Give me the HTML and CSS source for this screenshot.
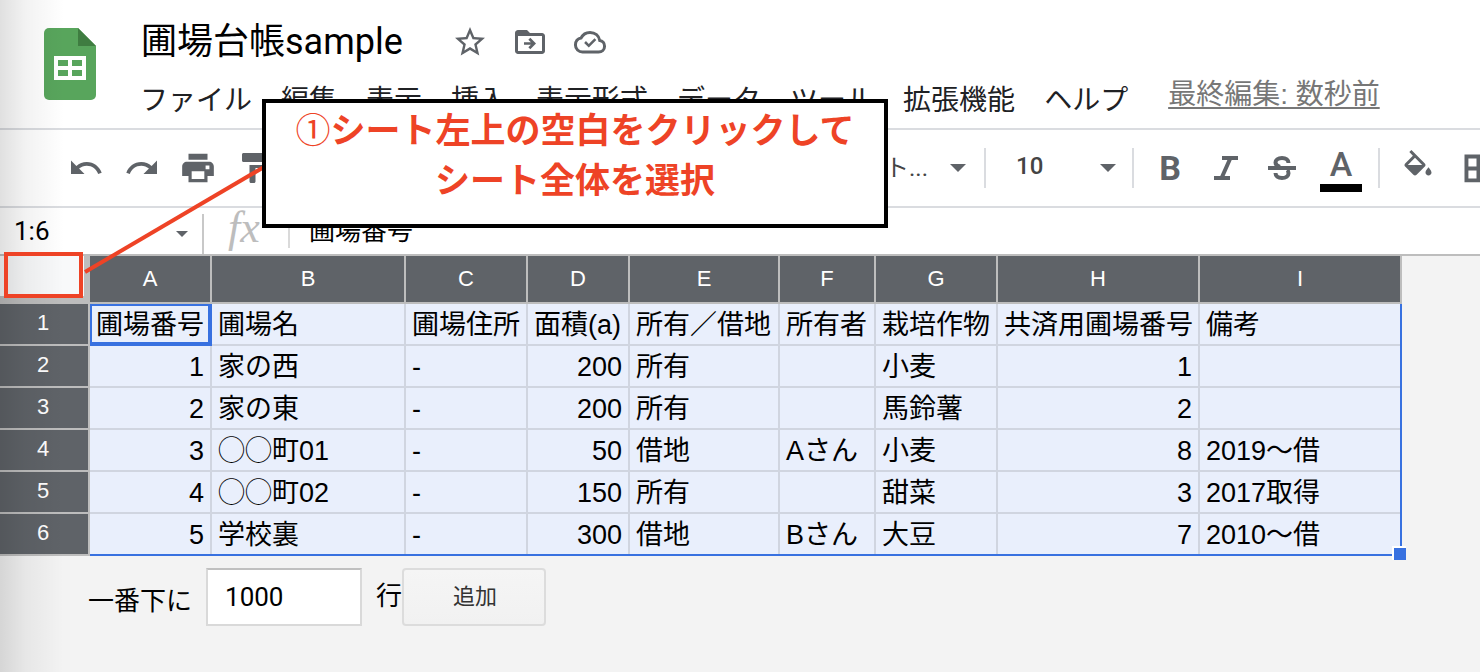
FILE: index.html
```html
<!DOCTYPE html>
<html lang="ja">
<head>
<meta charset="utf-8">
<title>圃場台帳sample</title>
<link rel="stylesheet" href="styles.css">
</head>
<body>
<div class="app">
  <header class="header">
    <svg class="logo" width="52" height="72" viewBox="0 0 52 72" aria-hidden="true">
      <path fill="#58a55c" d="M5 0h29l18 18v49a5 5 0 0 1-5 5H5a5 5 0 0 1-5-5V5a5 5 0 0 1 5-5z"/>
      <path fill="#3f7d41" d="M34 0l18 18H34z"/>
      <path fill="#fff" fill-rule="evenodd" d="M10 28h32v24H10zM14 32v6h10v-6zM28 32v6h10v-6zM14 42v6h10v-6zM28 42v6h10v-6z"/>
    </svg>
    <div class="heading">
      <div class="title-row">
        <h1 class="title">圃場台帳sample</h1>
        <div class="title-actions">
          <button class="icon-button" aria-label="スター"><svg class="icon" viewBox="0 0 24 24"><path d="M22 9.240l-7.190-.62L12 2 9.190 8.630 2 9.240l5.460 4.730L5.820 21 12 17.270 18.180 21l-1.630-7.030L22 9.240zM12 15.400l-3.760 2.270 1-4.280-3.320-2.880 4.380-.38L12 6.100l1.710 4.040 4.380.38-3.320 2.880 1 4.280L12 15.400z"/></svg></button>
          <button class="icon-button" aria-label="移動"><svg class="icon" viewBox="0 0 24 24"><path d="M20 6h-8l-2-2H4c-1.100 0-2 .9-2 2v12c0 1.100.9 2 2 2h16c1.100 0 2-.9 2-2V8c0-1.100-.9-2-2-2zm0 12H4V8h16v10z"/><path d="M8 12.200h4.600l-1.700-1.700L12.200 9.200 16 13l-3.800 3.800-1.300-1.300 1.700-1.700H8z"/></svg></button>
          <button class="icon-button" aria-label="保存状況"><svg class="icon" viewBox="0 0 24 24"><path fill="none" stroke="currentColor" stroke-width="2" d="M18.500 11C18 7.800 15.400 5.600 12 5.600c-2.600 0-4.800 1.400-5.900 3.700C3.700 9.600 2.300 11.600 2.300 14c0 2.700 2.100 4.700 4.700 4.700h10.700c2.300 0 4-1.700 4-3.900 0-2.100-1.400-3.600-3.200-3.800z"/><path d="M8.100 12.600l1.200-1.200 1.900 1.900 3.800-3.800 1.200 1.200-5 5z"/></svg></button>
        </div>
      </div>
      <nav class="menu">
        <button class="menu-item">ファイル</button>
        <button class="menu-item">編集</button>
        <button class="menu-item">表示</button>
        <button class="menu-item">挿入</button>
        <button class="menu-item">表示形式</button>
        <button class="menu-item">データ</button>
        <button class="menu-item">ツール</button>
        <button class="menu-item">拡張機能</button>
        <button class="menu-item">ヘルプ</button>
        <a class="last-edit" href="#">最終編集: 数秒前</a>
      </nav>
    </div>
  </header>

  <div class="toolbar">
    <div class="tool-group">
      <button class="icon-button" aria-label="元に戻す"><svg class="icon" viewBox="0 0 24 24"><path d="M12.500 8c-2.650 0-5.050.99-6.900 2.600L2 7v9h9l-3.620-3.620c1.390-1.160 3.160-1.880 5.120-1.880 3.540 0 6.550 2.310 7.600 5.500l2.370-.78C21.080 11.030 17.150 8 12.500 8z"/></svg></button>
      <button class="icon-button" aria-label="やり直し"><svg class="icon" viewBox="0 0 24 24"><path d="M18.400 10.600C16.550 8.990 14.150 8 11.500 8c-4.650 0-8.580 3.030-9.960 7.220L3.900 16c1.050-3.190 4.050-5.500 7.600-5.500 1.950 0 3.730.72 5.120 1.880L13 16h9V7l-3.600 3.600z"/></svg></button>
      <button class="icon-button" aria-label="印刷"><svg class="icon icon-large" viewBox="0 0 24 24"><path d="M19 8H5c-1.660 0-3 1.340-3 3v6h4v4h12v-4h4v-6c0-1.660-1.340-3-3-3zm-3 11H8v-5h8v5zm3.200-6.200h-2.400v-2.400h2.400zM18 3H6v3.800h12V3z"/></svg></button>
      <button class="icon-button" aria-label="書式を貼り付け"><svg class="icon" viewBox="0 0 24 24"><path d="M18 4V3c0-.55-.45-1-1-1H5c-.55 0-1 .45-1 1v4c0 .55.45 1 1 1h12c.55 0 1-.45 1-1V6h1v4H9v11c0 .55.45 1 1 1h2c.55 0 1-.45 1-1v-9h8V4h-3z"/></svg></button>
    </div>
    <div class="tool-select tool-font">
      <select class="select" aria-label="フォント"><option>デフォルト...</option></select>
      <svg class="arrow" viewBox="0 0 16 8"><path d="M0 0h16L8 8z"/></svg>
    </div>
    <div class="tool-select tool-size">
      <select class="select" aria-label="フォント サイズ"><option>10</option></select>
      <svg class="arrow" viewBox="0 0 16 8"><path d="M0 0h16L8 8z"/></svg>
    </div>
    <div class="tool-group tool-text">
      <button class="icon-button letter bold" aria-label="太字">B</button>
      <button class="icon-button" aria-label="斜体"><svg class="icon" viewBox="0 0 36 36"><path fill="none" stroke="currentColor" stroke-width="4" d="M14 8h16M6 28h16M22 9l-8 18"/></svg></button>
      <button class="icon-button" aria-label="取り消し線"><svg class="icon" viewBox="0 0 36 36"><path fill="none" stroke="currentColor" stroke-width="4" d="M4 18h28M24.500 13c0-3-2.500-5-6.500-5s-6.500 2-6.500 4.600c0 2 1.500 3.400 4.500 4.400M11.500 23c0 3 2.500 5 6.500 5s6.500-2 6.500-4.800c0-1.500-.5-2.600-1.500-3.200"/></svg></button>
      <button class="letter text-color" aria-label="テキストの色">A</button>
    </div>
    <div class="tool-group tool-cell">
      <button class="icon-button" aria-label="塗りつぶしの色"><svg class="icon" viewBox="0 0 24 24"><path d="M16.560 8.940L7.620 0 6.210 1.410l2.380 2.380-5.150 5.150c-.59.59-.59 1.540 0 2.120l5.500 5.500c.29.29.68.44 1.060.44s.77-.15 1.060-.44l5.500-5.500c.59-.58.59-1.530 0-2.120zM5.210 10L10 5.210 14.790 10H5.210zM19 11.500s-2 2.170-2 3.500c0 1.100.9 2 2 2s2-.9 2-2c0-1.330-2-3.500-2-3.500z"/></svg></button>
      <button class="icon-button" aria-label="枠線"><svg class="icon" viewBox="0 0 24 24"><path fill-rule="evenodd" d="M3 3v18.500h18.500V3zM5.600 5.600H11V11H5.600zM13.600 5.600H19V11h-5.400zM5.600 13.600H11V19H5.600zM13.600 13.600H19V19h-5.400z"/></svg></button>
    </div>
  </div>

  <div class="formula-bar">
    <div class="name-box">
      <input class="name-input" type="text" value="1:6" aria-label="名前ボックス">
      <svg class="arrow arrow-small" viewBox="0 0 16 8"><path d="M0 0h16L8 8z"/></svg>
    </div>
    <span class="fx">fx</span>
    <input class="formula-input" type="text" value="圃場番号" aria-label="数式">
  </div>

  <main class="sheet">
    <div class="grid-area">
      <table class="grid">
        <colgroup>
          <col class="w-head"><col class="w-m"><col class="w-b"><col class="w-m"><col class="w-d"><col class="w-e"><col class="w-f"><col class="w-m"><col class="w-l"><col class="w-l">
        </colgroup>
        <thead>
          <tr><td class="corner"></td><th>A</th><th>B</th><th>C</th><th>D</th><th>E</th><th>F</th><th>G</th><th>H</th><th>I</th></tr>
        </thead>
        <tbody>
          <tr><th>1</th><td class="active">圃場番号</td><td>圃場名</td><td>圃場住所</td><td>面積(a)</td><td>所有／借地</td><td>所有者</td><td>栽培作物</td><td>共済用圃場番号</td><td>備考</td></tr>
          <tr><th>2</th><td class="num">1</td><td>家の西</td><td>-</td><td class="num">200</td><td>所有</td><td></td><td>小麦</td><td class="num">1</td><td></td></tr>
          <tr><th>3</th><td class="num">2</td><td>家の東</td><td>-</td><td class="num">200</td><td>所有</td><td></td><td>馬鈴薯</td><td class="num">2</td><td></td></tr>
          <tr><th>4</th><td class="num">3</td><td>◯◯町01</td><td>-</td><td class="num">50</td><td>借地</td><td>Aさん</td><td>小麦</td><td class="num">8</td><td>2019〜借</td></tr>
          <tr><th>5</th><td class="num">4</td><td>◯◯町02</td><td>-</td><td class="num">150</td><td>所有</td><td></td><td>甜菜</td><td class="num">3</td><td>2017取得</td></tr>
          <tr><th>6</th><td class="num">5</td><td>学校裏</td><td>-</td><td class="num">300</td><td>借地</td><td>Bさん</td><td>大豆</td><td class="num">7</td><td>2010〜借</td></tr>
        </tbody>
      </table>
      <div class="selection"><span class="fill-handle"></span></div>
    </div>
    <form class="add-rows">
      <label class="add-label" for="rows">一番下に</label>
      <input class="add-input" id="rows" type="text" value="1000">
      <span class="add-unit">行</span>
      <button class="add-button" type="button">追加</button>
    </form>
  </main>

  <div class="edge-shade"></div>
  <svg class="pointer-line" width="190" height="116" viewBox="0 0 190 116" aria-hidden="true"><path fill="none" stroke="#ee4326" stroke-width="4" d="M5 112L184 7"/></svg>
  <div class="corner-mark"></div>
  <p class="callout"><span class="step">①</span>シート左上の空白をクリックして<br>シート全体を選択</p>
</div>
</body>
</html>
```
FILE: styles.css
```css
* {
  box-sizing: border-box;
}

body {
  margin: 0;
  background: #f3f3f3;
  font-family: "Liberation Sans", "Noto Sans CJK JP", sans-serif;
  color: #000;
}

button,
input,
select {
  font: inherit;
  color: inherit;
  background: none;
  border: 0;
  padding: 0;
  margin: 0;
  outline: 0;
}

.app {
  position: relative;
  min-height: 100vh;
  overflow: hidden;
}

/* Header */
.header {
  display: flex;
  align-items: flex-start;
  gap: 45px;
  padding: 16px 0 7px 44px;
  background: #fff;
  border-bottom: 2px solid #dadce0;
  white-space: nowrap;
}

.logo {
  flex: none;
  margin-top: 12px;
}

.title-row {
  display: flex;
  align-items: center;
  gap: 49px;
  line-height: 52px;
}

.title {
  margin: 0;
  font-family: Roboto, "Noto Sans CJK JP", sans-serif;
  font-size: 36px;
  font-weight: 400;
}

.title-actions {
  display: flex;
  gap: 24px;
}

.icon-button {
  display: flex;
  flex: none;
  align-items: center;
  justify-content: center;
  width: 36px;
  height: 36px;
  color: #5f6368;
}

.icon {
  flex: none;
  width: 36px;
  height: 36px;
  fill: currentColor;
}

.icon-large {
  width: 38px;
  height: 38px;
}

.menu {
  display: flex;
  align-items: center;
  gap: 29px;
  margin: 13px 0 0 -1px;
  font-size: 28px;
  line-height: 40px;
  color: #202124;
}

.last-edit {
  margin-left: 11px;
  padding-bottom: 12px;
  line-height: 28px;
  color: #777;
  text-decoration-thickness: 2px;
  text-underline-offset: 3px;
}

/* Toolbar */
.toolbar {
  display: flex;
  align-items: center;
  height: 78px;
  padding-left: 68px;
  background: #fff;
  border-bottom: 2px solid #dadce0;
  overflow: hidden;
}

.tool-group {
  display: flex;
  flex: none;
  align-items: center;
  gap: 20px;
}

.tool-select {
  display: flex;
  flex: none;
  align-items: center;
  height: 40px;
  color: #444;
  border-right: 2px solid #dadce0;
  font-family: Roboto, "Noto Sans CJK JP", sans-serif;
  font-size: 24px;
}

.select {
  appearance: none;
}

.tool-font {
  gap: 22px;
  margin-left: 490px;
  padding-right: 18px;
  width: 224px;
  justify-content: flex-end;
}

.tool-size {
  justify-content: space-between;
  width: 148px;
  padding: 0 16px 0 30px;
  font-weight: 500;
}

.tool-size .select {
  padding-bottom: 4px;
}

.arrow {
  flex: none;
  width: 16px;
  height: 8px;
  fill: #5f6368;
}

.letter {
  font-family: Roboto, sans-serif;
  font-size: 34px;
  font-weight: 500;
  line-height: 36px;
  color: #5f6368;
}

.bold {
  font-weight: 700;
}

.tool-text {
  height: 40px;
  padding: 0 16px 0 18px;
  border-right: 2px solid #dadce0;
}

.text-color {
  width: 42px;
  height: 48px;
  border-bottom: 8px solid #000;
}

.tool-cell {
  gap: 24px;
  padding-left: 20px;
}

/* Formula bar */
.formula-bar {
  display: flex;
  align-items: flex-start;
  height: 48px;
  padding-top: 6px;
  background: #fff;
  border-bottom: 2px solid #bdbdbd;
  font-size: 26px;
  line-height: 34px;
}

.name-box {
  display: flex;
  flex: none;
  align-items: center;
  width: 204px;
  height: 40px;
  padding: 0 14px;
  border-right: 2px solid #c8c8c8;
}

.name-input {
  flex: 1;
  min-width: 0;
  height: 40px;
  padding-bottom: 6px;
  font-family: Roboto, sans-serif;
}

.arrow-small {
  width: 12px;
  height: 6px;
}

.fx {
  flex: none;
  width: 86px;
  height: 34px;
  padding-left: 24px;
  border-right: 2px solid #dadada;
  font-family: "Liberation Serif", serif;
  font-size: 44px;
  font-style: italic;
  line-height: 28px;
  color: #bdbdbd;
}

.formula-input {
  flex: 1;
  height: 34px;
  padding-left: 19px;
}

/* Grid */
.grid-area {
  position: relative;
  width: max-content;
}

.grid {
  table-layout: fixed;
  width: 1402px;
  border-spacing: 0;
  white-space: nowrap;
}

.w-head { width: 90px; }
.w-m { width: 122px; }
.w-b { width: 194px; }
.w-d { width: 102px; }
.w-e { width: 150px; }
.w-f { width: 96px; }
.w-l { width: 202px; }

.grid th {
  padding: 0;
  background: #5f6368;
  border: solid #bdbdbd;
  border-width: 0 2px 2px 0;
  color: #fff;
  font-size: 22px;
  font-weight: 400;
}

.grid thead th {
  height: 48px;
  line-height: 46px;
}

.grid tbody th {
  padding: 0 2px 2px 0;
  line-height: 38px;
}

.grid td {
  height: 42px;
  padding: 2px 6px 0;
  background: #e9effc;
  border: solid #d0d5e0;
  border-width: 0 2px 2px 0;
  font-size: 27px;
  line-height: 38px;
}

.grid .corner {
  background: #f8f9fa;
  border: solid #bdbdbd;
  border-width: 0 6px 8px 0;
}

.grid .num {
  text-align: right;
}

.grid .active {
  border-color: #3871e0;
  box-shadow: inset 0 0 0 2px #3871e0;
}

.selection {
  position: absolute;
  top: 48px;
  right: 0;
  bottom: 0;
  left: 90px;
  border: solid #3871e0;
  border-width: 0 2px 2px 0;
  pointer-events: none;
}

.fill-handle {
  position: absolute;
  right: -6px;
  bottom: -6px;
  width: 14px;
  height: 14px;
  background: #3871e0;
  border: solid #fff;
  border-width: 2px 0 0 2px;
}

.add-rows {
  display: flex;
  align-items: center;
  padding: 12px 0 0 88px;
  font-size: 26px;
}

.add-label {
  padding-top: 2px;
}

.add-input {
  width: 156px;
  height: 58px;
  margin: 0 14px;
  padding: 0 17px;
  background: #fff;
  border: 2px solid #d9d9d9;
  border-top-color: #c0c0c0;
  font-family: Roboto, sans-serif;
}

.add-unit {
  padding-bottom: 8px;
}

.add-button {
  width: 144px;
  height: 58px;
  padding: 0 0 6px 2px;
  background: linear-gradient(#f5f5f5, #f1f1f1);
  border: 2px solid #dcdcdc;
  border-radius: 4px;
  color: #333;
  font-size: 22px;
}

/* Annotations */
.edge-shade {
  position: absolute;
  top: 0;
  bottom: 0;
  left: 0;
  width: 64px;
  background: linear-gradient(to right, rgba(0, 0, 0, 0.12), rgba(0, 0, 0, 0.05) 40%, rgba(0, 0, 0, 0));
  pointer-events: none;
}

.pointer-line {
  position: absolute;
  top: 160px;
  left: 80px;
}

.corner-mark {
  position: absolute;
  top: 252px;
  left: 4px;
  width: 79px;
  height: 46px;
  border: 4px solid #ee4326;
}

.callout {
  position: absolute;
  top: 99px;
  left: 262px;
  width: 626px;
  height: 129px;
  margin: 0;
  background: #fff;
  border: 4px solid #000;
  color: #ee4326;
  font-family: "Noto Sans CJK JP", sans-serif;
  font-size: 35px;
  font-weight: 700;
  line-height: 50px;
  text-align: center;
  white-space: nowrap;
}

.step {
  font-weight: 400;
}
```
